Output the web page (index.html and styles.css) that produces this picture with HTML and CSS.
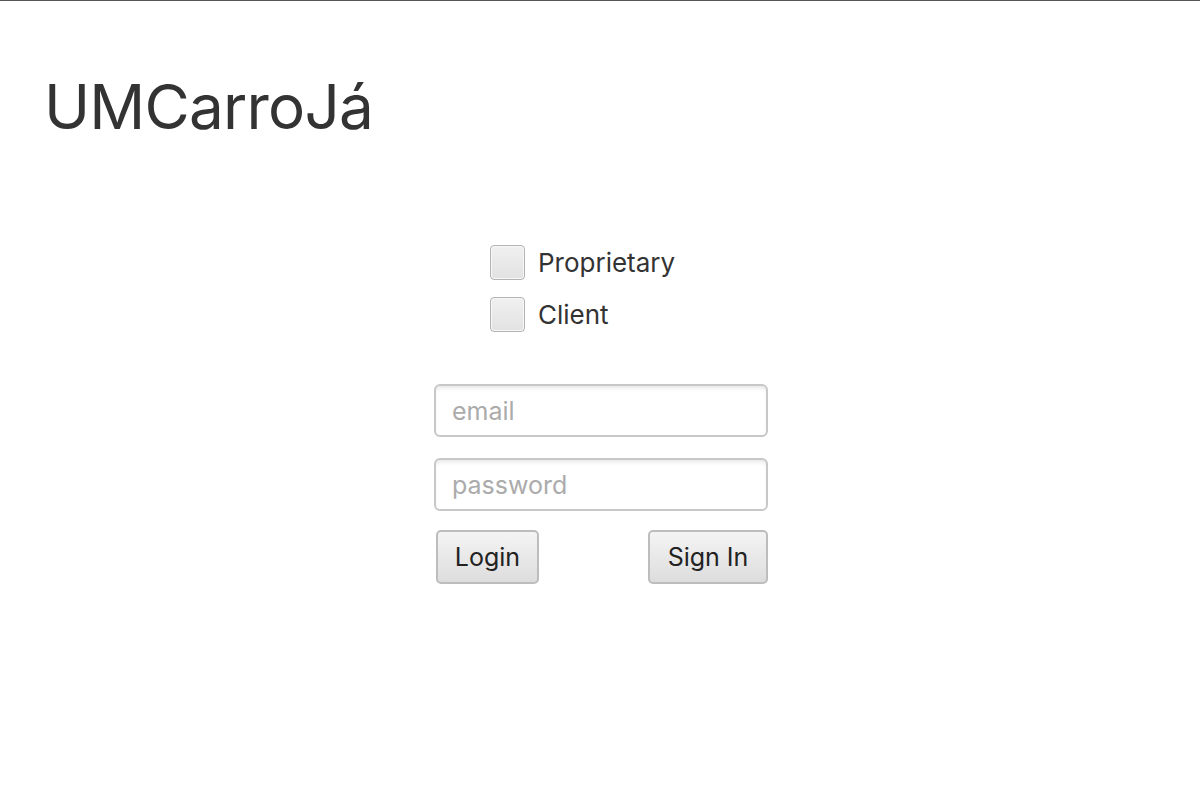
FILE: index.html
```html
<!DOCTYPE html>
<html lang="pt">
<head>
<meta charset="utf-8">
<title>UMCarroJá</title>
<link rel="stylesheet" href="styles.css">
</head>
<body>
<div class="window">
  <h1 class="title">UMCarroJá</h1>
  <div class="form">
    <div class="roles">
      <label class="check"><span class="box"></span><span class="label">Proprietary</span></label>
      <label class="check"><span class="box"></span><span class="label">Client</span></label>
    </div>
    <div class="fields">
      <input class="field" type="text" placeholder="email">
      <input class="field" type="password" placeholder="password">
    </div>
    <div class="actions">
      <button class="btn btn-login">Login</button>
      <button class="btn btn-signin">Sign In</button>
    </div>
  </div>
</div>
</body>
</html>
```

FILE: styles.css
```css
html, body {
  margin: 0;
  padding: 0;
  background: #ffffff;
}
body {
  font-family: Inter, "Liberation Sans", sans-serif;
  color: #333333;
  height: 802px;
  overflow: hidden;
}
.window {
  border-top: 1px solid #555555;
  height: 801px;
  box-sizing: border-box;
}
.title {
  margin: 0;
  padding: 68px 0 0 44px;
  font-size: 62px;
  font-weight: 400;
  line-height: 76px;
  color: #333333;
  letter-spacing: -0.8px;
}
.form {
  width: 334px;
  margin: 100px auto 0;
  padding-left: 2px;
  display: flex;
  flex-direction: column;
}
.roles {
  display: flex;
  flex-direction: column;
  gap: 17px;
  padding-left: 56px;
}
.check {
  display: flex;
  align-items: center;
  gap: 13px;
}
.box {
  width: 35px;
  height: 35px;
  box-sizing: border-box;
  border: 1px solid #b3b3b3;
  border-radius: 4px;
  background: linear-gradient(#f0f0f0, #e2e2e2);
  box-shadow: inset 0 0 0 1px #f7f7f7;
}
.label {
  font-size: 26px;
  color: #333333;
}
.fields {
  display: flex;
  flex-direction: column;
  gap: 21px;
  margin-top: 52px;
}
.field {
  width: 334px;
  height: 53px;
  box-sizing: border-box;
  border: 2px solid #c8c8c8;
  border-radius: 6px;
  padding: 0 16px;
  font-family: Inter, "Liberation Sans", sans-serif;
  font-size: 25px;
  color: #333;
  background: #ffffff;
  box-shadow: inset 0 4px 4px -2px #e6e6e6;
  outline: none;
}
.field::placeholder {
  color: #ababab;
}
.actions {
  display: flex;
  justify-content: space-between;
  margin-top: 19px;
  padding-left: 2px;
}
.btn {
  height: 54px;
  box-sizing: border-box;
  border: 2px solid #bdbdbd;
  border-radius: 5px;
  background: linear-gradient(#f4f4f4, #dddddd);
  font-family: Inter, "Liberation Sans", sans-serif;
  font-size: 25px;
  color: #222222;
  padding: 0 16px;
}
.btn-login {
  width: 103px;
}
.btn-signin {
  width: 120px;
}
```
